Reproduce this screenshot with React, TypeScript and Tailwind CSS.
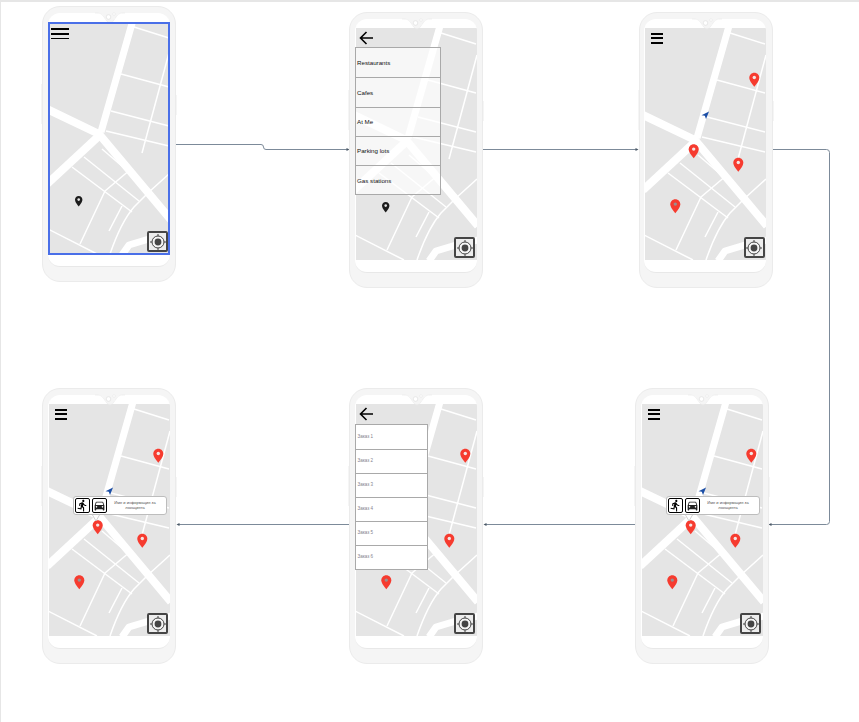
import type { ReactNode } from "react";
import { MdDirectionsCar, MdDirectionsRun } from "react-icons/md";

const font = "[font-family:'Liberation_Sans',Arial,sans-serif]";

const redPins: [number, number, boolean][] = [
  [109.3, 58.7, false],
  [48.7, 130.3, false],
  [93.3, 143.7, false],
  [30.3, 185.3, true],
];

function RedPin({ x, y, dark }: { x: number; y: number; dark: boolean }) {
  return (
    <g transform={`translate(${x - 5} ${y - 14})`}>
      <path
        d="M5 0C2.2 0 0 2.2 0 5c0 3.6 5 9 5 9s5-5.4 5-9c0-2.8-2.2-5-5-5z"
        fill="#f63b2f"
      />
      <circle cx="5" cy="4.8" r="1.7" fill={dark ? "#9a8f8f" : "#f4e6e4"} />
    </g>
  );
}

function MapDrawing({
  blackPin,
  pins,
  arrow,
}: {
  blackPin?: boolean;
  pins?: boolean;
  arrow?: boolean;
}) {
  return (
    <svg width="121" height="232" viewBox="0 0 121 232" className="block">
      <rect width="121" height="232" fill="#e5e5e5" />
      <g stroke="#fff" fill="none" strokeLinecap="butt" strokeLinejoin="round">
        <g strokeWidth="7">
          <path d="M84 -2L52 110" />
          <path d="M-2 87L50 112L122 198" strokeWidth="8" />
          <path d="M-2 162L52 112" strokeWidth="8" />
          <path d="M73 233L80 223L100 217L122 212" />
        </g>
        <g strokeWidth="1.5">
          <path d="M85 5L120 16" />
          <path d="M72 52L120 65" />
          <path d="M62 89L120 104" />
          <path d="M57 109L120 124" />
          <path d="M121 27L93 131" />
          <path d="M53 127L102 169" />
          <path d="M35 135L90 179" />
          <path d="M23 145L83 190" />
          <path d="M82 147L56 169L31 222" />
          <path d="M121 151L100 170L85 185Q72 200 61 232" />
          <path d="M73 184L60 209" />
          <path d="M-1 207L48 232" />
        </g>
      </g>
      {pins && redPins.map(([x, y, dark]) => <RedPin key={x} x={x} y={y} dark={dark} />)}
      {blackPin && (
        <g transform="translate(26 174)">
          <path
            d="M3.7 0C1.6 0 0 1.6 0 3.7c0 2.6 3.7 6.8 3.7 6.8s3.7-4.2 3.7-6.8C7.4 1.6 5.8 0 3.7 0z"
            fill="#1c1c1c"
          />
          <circle cx="3.7" cy="3.6" r="1.3" fill="#e5e5e5" />
        </g>
      )}
      {arrow && <path d="M64 83.5L61 91L59.8 87.8L56.5 87.2z" fill="#1b4ea6" />}
    </svg>
  );
}

function TargetButton() {
  return (
    <div className="absolute right-[1.5px] bottom-[1px] flex h-[21px] w-[21px] items-center justify-center rounded-[2px] border-[2.5px] border-[#454545] bg-[#ededed]">
      <svg width="16" height="16" viewBox="0 0 16 16">
        <circle cx="8" cy="8" r="6" fill="#f5f5f5" stroke="#454545" strokeWidth="1" />
        <circle cx="8" cy="8" r="3.4" fill="#454545" />
        <path d="M8 0V2.2M8 13.8V16M0 8H2.2M13.8 8H16" stroke="#454545" strokeWidth="1" />
      </svg>
    </div>
  );
}

function Hamburger({ large }: { large?: boolean }) {
  if (large) {
    return (
      <div className="absolute top-[6px] left-[2px] flex w-[18px] flex-col gap-[3px]">
        <div className="h-[1.8px] bg-black" />
        <div className="h-[1.8px] bg-black" />
        <div className="h-[1.8px] bg-black" />
      </div>
    );
  }
  return (
    <div className="absolute top-[5px] left-[6px] flex w-[12px] flex-col gap-[2.4px]">
      <div className="h-[2px] bg-black" />
      <div className="h-[2px] bg-black" />
      <div className="h-[2px] bg-black" />
    </div>
  );
}

function BackArrow() {
  return (
    <svg width="15" height="14" viewBox="0 0 15 14" className="absolute top-[2.5px] left-[3px]">
      <path d="M14 7H1.5M7.5 1L1.5 7L7.5 13" fill="none" stroke="#000" strokeWidth="1.6" />
    </svg>
  );
}

function PlaceTooltip() {
  return (
    <div className="absolute top-[92px] left-[24px] flex h-[19px] w-[94px] items-center gap-[2px] rounded-[3px] border border-[#bdbdbd] bg-white pl-[1px]">
      <div className="flex h-[15px] w-[15px] shrink-0 items-center justify-center rounded-[2px] border-[1.5px] border-black bg-white">
        <MdDirectionsRun className="h-[13px] w-[13px] text-black" />
      </div>
      <div className="flex h-[15px] w-[15px] shrink-0 items-center justify-center rounded-[2px] border-[1.5px] border-black bg-white">
        <MdDirectionsCar className="h-[13px] w-[13px] text-[#222]" />
      </div>
      <div className={`flex-1 pr-[6px] pl-[2px] text-center text-[4px] leading-[4.4px] text-[#555] ${font}`}>
        Име и информация за локацията
      </div>
      <svg width="8" height="7" viewBox="0 0 8 7" className="absolute top-[17.5px] left-[18px]">
        <path d="M0.5 0L4 6L7.5 0" fill="#fff" stroke="#bdbdbd" strokeWidth="0.7" />
      </svg>
    </div>
  );
}

function PlaceTypes() {
  const rows = ["Restaurants", "Cafes", "At Me", "Parking lots", "Gas stations"];
  return (
    <div className="absolute top-[19px] left-[-1px] flex w-[86px] flex-col border border-[#a9a9a9] bg-white/70">
      {rows.map((row, i) => (
        <div
          key={row}
          className={`flex h-[29.3px] items-center pl-[1.5px] text-[6.2px] text-[#111] ${font} ${
            i > 0 ? "border-t border-[#a9a9a9]" : ""
          }`}
        >
          {row}
        </div>
      ))}
    </div>
  );
}

function OrderList() {
  const rows = ["Заказ 1", "Заказ 2", "Заказ 3", "Заказ 4", "Заказ 5", "Заказ 6"];
  return (
    <div className="absolute top-[20px] left-[-1px] flex w-[73px] flex-col border-[1.5px] border-[#a9a9a9] bg-white">
      {rows.map((row, i) => (
        <div
          key={row}
          className={`flex h-[24px] items-center pl-[2px] text-[4.5px] text-[#857f8d] ${font} ${
            i > 0 ? "border-t-[1.5px] border-[#a9a9a9]" : ""
          }`}
        >
          {row}
        </div>
      ))}
    </div>
  );
}

function Phone({
  className,
  children,
  selected,
}: {
  className: string;
  children: ReactNode;
  selected?: boolean;
}) {
  return (
    <div className={`absolute h-[276px] w-[134px] rounded-[18px] border border-[#ebebeb] bg-[#f5f5f5] pt-[5.5px] pl-[4.5px] ${className}`}>
      {/* side buttons */}
      <div className="absolute top-[77px] left-[-2px] h-[40px] w-[1px] bg-[#f5f5f5]" />
      <div className="absolute top-[88px] right-[-2px] h-[20px] w-[1px] bg-[#f5f5f5]" />
      <div className="flex h-[254px] w-[122px] flex-col overflow-hidden rounded-[12px] border-b border-[#e8e8e8] bg-white pl-[1px]">
        <div className="h-[9.5px] shrink-0" />
        <div className="relative h-[232px] w-[121px] shrink-0 border-b border-[#dcdcdc]">{children}</div>
      </div>
      {/* notch */}
      <svg width="30" height="12" viewBox="0 0 30 12" className="absolute top-[4.5px] left-[52px]">
        <path d="M0 0.5C6 0.5 6 1 9 4.5C12 9 13 10.5 15 10.5C17 10.5 18 9 21 4.5C24 1 24 0.5 30 0.5V0H0z" fill="#f5f5f5" />
        <path d="M0 1C6 1 6 1.5 9 5C12 9.5 13 11 15 11C17 11 18 9.5 21 5C24 1.5 24 1 30 1" fill="none" stroke="#e8e8e8" strokeWidth="0.6" />
        <circle cx="13.5" cy="5" r="2.3" fill="#fff" stroke="#dcdcdc" strokeWidth="0.6" />
        <circle cx="19" cy="2" r="1.3" fill="#fff" stroke="#e2e2e2" strokeWidth="0.5" />
      </svg>
      {selected && (
        <div className="absolute top-[14.5px] left-[5px] h-[233px] w-[122px] border-2 border-[#4a6fe8]" />
      )}
    </div>
  );
}

function Connectors() {
  const line = "#7c8a99";
  return (
    <svg width="859" height="722" className="absolute top-0 left-0">
      <g fill="none" stroke={line} strokeWidth="1">
        <path d="M176 144.5H261Q263.5 144.5 263.5 147V147Q263.5 149.5 266 149.5H347" />
        <path d="M483 149.5H636" />
        <path d="M772 149.5H826.5Q829.5 149.5 829.5 152.5V521.5Q829.5 524.5 826.5 524.5H771" />
        <path d="M635 524.5H486" />
        <path d="M349 524.5H179" />
      </g>
      <g fill="#4a5866">
        <path d="M349.5 149.5L346.5 148V151z" />
        <path d="M638.5 149.5L635.5 148V151z" />
        <path d="M768.5 524.5L771.5 523V526z" />
        <path d="M483.5 524.5L486.5 523V526z" />
        <path d="M176.5 524.5L179.5 523V526z" />
      </g>
    </svg>
  );
}

export default function App() {
  return (
    <div className="relative h-[722px] w-[859px] overflow-hidden border-t-2 border-l border-[#e6e6e6] bg-white">
      <div className="absolute top-[-2px] left-[-1px] h-[722px] w-[859px]">
        <Connectors />

        <Phone className="top-[6px] left-[42px]" selected>
          <MapDrawing blackPin />
          <Hamburger large />
          <TargetButton />
        </Phone>

        <Phone className="top-[12px] left-[349px]">
          <MapDrawing blackPin />
          <BackArrow />
          <PlaceTypes />
          <TargetButton />
        </Phone>

        <Phone className="top-[12px] left-[638.5px]">
          <MapDrawing pins arrow />
          <Hamburger />
          <TargetButton />
        </Phone>

        <Phone className="top-[388px] left-[635px]">
          <MapDrawing pins arrow />
          <Hamburger />
          <PlaceTooltip />
          <TargetButton />
        </Phone>

        <Phone className="top-[388px] left-[349px]">
          <MapDrawing pins />
          <BackArrow />
          <OrderList />
          <TargetButton />
        </Phone>

        <Phone className="top-[388px] left-[42px]">
          <MapDrawing pins arrow />
          <Hamburger />
          <PlaceTooltip />
          <TargetButton />
        </Phone>
      </div>
    </div>
  );
}
